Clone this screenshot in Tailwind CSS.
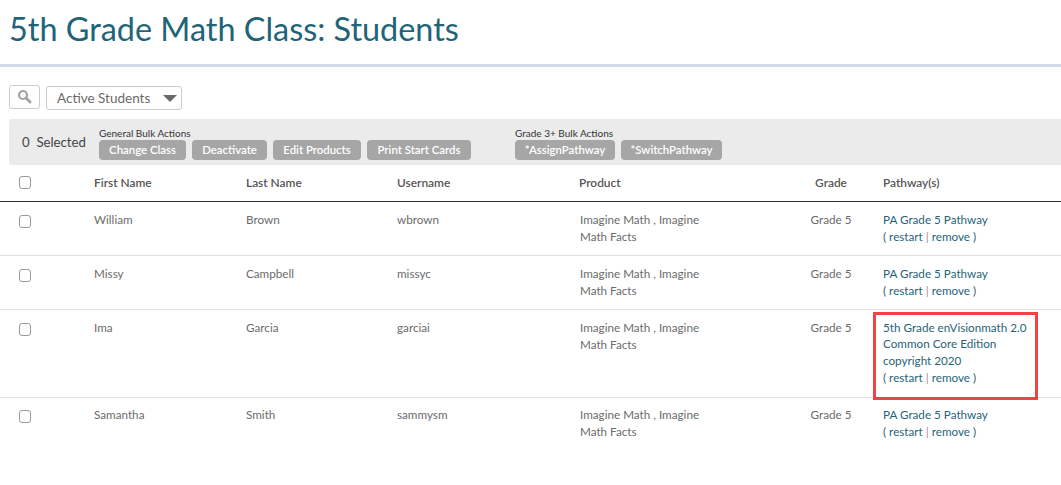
<!DOCTYPE html>
<html><head><meta charset="utf-8"><script src="https://cdn.jsdelivr.net/npm/@tailwindcss/browser@4"></script></head>
<body class="bg-white overflow-hidden font-['Lato',sans-serif] w-[1061px] h-[485px] relative">
<header class="h-[67px] border-b-[3px] border-[#d5dae5] pl-[9px] pt-[8px]">
<h1 class="text-[32.4px] leading-[42px] text-[#1f6478] font-normal">5th Grade Math Class: Students</h1>
</header>
<div class="pl-[9px] pt-[18px] flex items-start gap-[6px] h-[52px]">
<button class="w-[31px] h-[24px] border border-[#ccc] rounded-[3px] flex items-center justify-center pb-[2px]">
<svg width="15" height="15" viewBox="0 0 15 15"><circle cx="6" cy="6" r="4" fill="none" stroke="#a3a3a3" stroke-width="2.2"/><path d="M9 9l4 4" stroke="#a3a3a3" stroke-width="3" stroke-linecap="round"/></svg>
</button>
<div class="w-[136px] h-[24px] mt-[1px] border border-[#ccc] rounded-[3px] flex items-center pl-[10px] text-[13.5px] text-[#6b6b6b] whitespace-nowrap"><span class="w-[106px]">Active Students</span>
<svg class="mt-[1px]" width="14" height="7" viewBox="0 0 14 7"><path d="M0 0h14L7 7z" fill="#6a6a6a"/></svg></div>
</div>
<div class="ml-[9px] w-[1052px] h-[46px] bg-[#ebebeb] rounded-l-[3px] flex">
<div class="pl-[13px] pt-[15px] w-[90px] text-[13.2px] leading-[17px] text-[#444] whitespace-pre">0  Selected</div>
<div class="pt-[8px] w-[416px]">
<div class="text-[10px] leading-[12px] text-[#333] mb-[1px]">General Bulk Actions</div>
<div class="flex gap-[6px]">
<span class="h-[20px] w-[87px] rounded-[4px] bg-[#a6a6a6] text-white text-[11.4px] leading-[20px] text-center font-semibold">Change Class</span>
<span class="h-[20px] w-[75px] rounded-[4px] bg-[#a6a6a6] text-white text-[11.4px] leading-[20px] text-center font-semibold">Deactivate</span>
<span class="h-[20px] w-[88px] rounded-[4px] bg-[#a6a6a6] text-white text-[11.4px] leading-[20px] text-center font-semibold">Edit Products</span>
<span class="h-[20px] w-[104px] rounded-[4px] bg-[#a6a6a6] text-white text-[11.4px] leading-[20px] text-center font-semibold">Print Start Cards</span>
</div></div>
<div class="pt-[8px]">
<div class="text-[10px] leading-[12px] text-[#333] mb-[1px]">Grade 3+ Bulk Actions</div>
<div class="flex gap-[6px]">
<span class="h-[20px] w-[100px] rounded-[4px] bg-[#a6a6a6] text-white text-[11.4px] leading-[20px] text-center font-semibold">*AssignPathway</span>
<span class="h-[20px] w-[101px] rounded-[4px] bg-[#a6a6a6] text-white text-[11.4px] leading-[20px] text-center font-semibold">*SwitchPathway</span>
</div></div>
</div>
<table class="w-[1061px] table-fixed border-collapse text-[11.7px] leading-[17px] text-[#6b6b6b]">
<colgroup><col class="w-[94px]"><col class="w-[152px]"><col class="w-[151px]"><col class="w-[182px]"><col class="w-[200px]"><col class="w-[104px]"><col></colgroup>
<thead><tr class="h-[36px] border-b border-[#333] text-[#555] text-left text-[11.9px]">
<th class="pl-[19px] align-middle font-normal"><span class="block w-[12px] h-[13px] border border-[#999] rounded-[3px]"></span></th>
<th class="font-semibold">First Name</th><th class="font-semibold">Last Name</th><th class="font-semibold">Username</th><th class="font-semibold">Product</th>
<th class="font-semibold text-center">Grade</th>
<th class="font-semibold">Pathway(s)</th></tr></thead>
<tbody>
<tr class="h-[54px] border-b border-[#e0e0e0] align-top">
<td class="pl-[19px] pt-[13px]"><span class="block w-[12px] h-[13px] border border-[#999] rounded-[3px]"></span></td>
<td class="pt-[9px]">William</td><td class="pt-[9px]">Brown</td><td class="pt-[9px]">wbrown</td>
<td class="pt-[9px] pl-[1px] pr-[70px]">Imagine Math , Imagine Math Facts</td><td class="pt-[9px] text-center">Grade 5</td>
<td class="pt-[9px] text-[#1f6478]">PA Grade 5 Pathway<br>( restart <span class="text-[#a08aa0]">|</span> remove )</td></tr>
<tr class="h-[54px] border-b border-[#e0e0e0] align-top">
<td class="pl-[19px] pt-[13px]"><span class="block w-[12px] h-[13px] border border-[#999] rounded-[3px]"></span></td>
<td class="pt-[9px]">Missy</td><td class="pt-[9px]">Campbell</td><td class="pt-[9px]">missyc</td>
<td class="pt-[9px] pl-[1px] pr-[70px]">Imagine Math , Imagine Math Facts</td><td class="pt-[9px] text-center">Grade 5</td>
<td class="pt-[9px] text-[#1f6478]">PA Grade 5 Pathway<br>( restart <span class="text-[#a08aa0]">|</span> remove )</td></tr>
<tr class="h-[88px] border-b border-[#e0e0e0] align-top">
<td class="pl-[19px] pt-[13px]"><span class="block w-[12px] h-[13px] border border-[#999] rounded-[3px]"></span></td>
<td class="pt-[9px]">Ima</td><td class="pt-[9px]">Garcia</td><td class="pt-[9px]">garciai</td>
<td class="pt-[9px] pl-[1px] pr-[70px]">Imagine Math , Imagine Math Facts</td><td class="pt-[9px] text-center">Grade 5</td>
<td class="pt-[9px] text-[#1f6478] leading-[16.7px]">5th Grade enVisionmath 2.0<br>Common Core Edition<br>copyright 2020<br>( restart <span class="text-[#a08aa0]">|</span> remove )</td></tr>
<tr class="h-[54px] align-top">
<td class="pl-[19px] pt-[12px]"><span class="block w-[12px] h-[13px] border border-[#999] rounded-[3px]"></span></td>
<td class="pt-[8px]">Samantha</td><td class="pt-[8px]">Smith</td><td class="pt-[8px]">sammysm</td>
<td class="pt-[8px] pl-[1px] pr-[70px]">Imagine Math , Imagine Math Facts</td><td class="pt-[8px] text-center">Grade 5</td>
<td class="pt-[8px] text-[#1f6478]">PA Grade 5 Pathway<br>( restart <span class="text-[#a08aa0]">|</span> remove )</td></tr>
</tbody>
</table>
<div class="absolute left-[873px] top-[312px] w-[165px] h-[88px] border-[3px] border-[#f04444]"></div>
</body></html>
